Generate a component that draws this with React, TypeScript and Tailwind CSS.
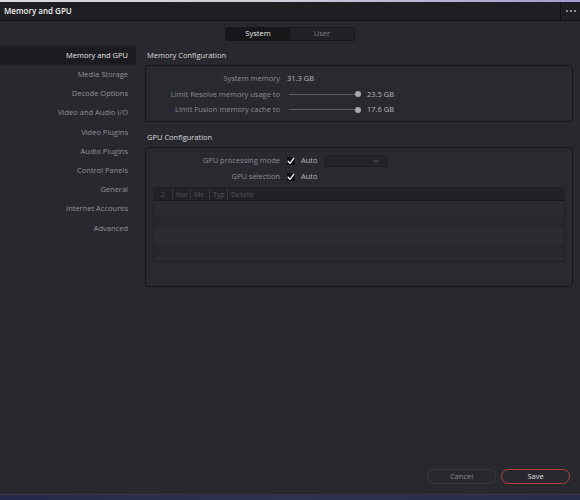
import React from "react";

const sidebar = [
  "Memory and GPU",
  "Media Storage",
  "Decode Options",
  "Video and Audio I/O",
  "Video Plugins",
  "Audio Plugins",
  "Control Panels",
  "General",
  "Internet Accounts",
  "Advanced",
];

function Check() {
  return (
    <div className="w-[10px] h-[10px] bg-[#0e0e10] rounded-[1px] border border-[#2e2e33] flex items-center justify-center">
      <svg width="8" height="8" viewBox="0 0 8 8">
        <path d="M1.2 4.3 L3.1 6.3 L6.9 1.2" stroke="#f2f2f2" strokeWidth="1.4" fill="none" strokeLinecap="round" strokeLinejoin="round" />
      </svg>
    </div>
  );
}

function Slider() {
  return (
    <div className="relative w-[72px] h-[8px] flex items-center">
      <div className="w-[68px] h-[1px] bg-[#5f5f65]" />
      <div className="absolute left-[66px] top-[1px] w-[6px] h-[6px] rounded-full bg-[#a9a9ae]" />
    </div>
  );
}

export default function App() {
  return (
    <div className="w-[580px] h-[500px] flex flex-col bg-[#262c47] font-['Open_Sans',sans-serif] overflow-hidden">
      <div className="h-[2px] bg-gradient-to-r from-[#d9d9de] via-[#cfcbd8] to-[#a29bd0]" />
      <div className="h-[493px] flex flex-col bg-[#29282e] border-b border-[#3a3940]">
        {/* title bar */}
        <div className="h-[19px] flex items-stretch bg-[#1f1f23] border-b border-[#131316]">
          <div className="flex-1 flex items-center pl-[4px] text-[8px] font-semibold text-[#f0f0f0] leading-none">
            Memory and GPU
          </div>
          <div className="w-[20px] border-l border-[#111113] flex items-center justify-center gap-[2px]">
            <div className="w-[2px] h-[2px] bg-[#8b8b90]" />
            <div className="w-[2px] h-[2px] bg-[#8b8b90]" />
            <div className="w-[2px] h-[2px] bg-[#8b8b90]" />
          </div>
        </div>
        {/* tabs */}
        <div className="flex justify-center mt-[6px]">
          <div className="flex h-[14px] w-[130px] rounded-[2px] border border-[#17171a] overflow-hidden text-[7.5px] leading-none">
            <div className="flex-1 bg-[#17171a] text-[#ececec] flex items-center justify-center">System</div>
            <div className="flex-1 bg-[#222126] text-[#7f7f85] flex items-center justify-center">User</div>
          </div>
        </div>
        {/* body */}
        <div className="flex-1 flex mt-[5px]">
          <div className="w-[136px] flex flex-col">
            {sidebar.map((s, i) => (
              <div
                key={s}
                className={
                  "h-[19.2px] flex items-center justify-end pr-[8px] text-[7.5px] leading-none " +
                  (i === 0 ? "bg-[#1c1c20] text-[#e8e8e8]" : "text-[#929297]")
                }
              >
                {s}
              </div>
            ))}
          </div>
          <div className="flex-1 flex flex-col pl-[9px] pr-[7px]">
            <div className="h-[19px] flex items-center pl-[2px] text-[7.5px] text-[#dcdcdc] leading-none">Memory Configuration</div>
            <div className="h-[57px] rounded-[3px] border border-[#17171a] bg-[#2a2930] pt-[5px] text-[7.5px] leading-none">
              <div className="h-[15.5px] flex items-center">
                <div className="w-[134px] text-right text-[#8d8d92]">System memory</div>
                <div className="ml-[7px] text-[#b9b9bd]">31.3 GB</div>
              </div>
              <div className="h-[15.5px] flex items-center">
                <div className="w-[134px] text-right text-[#8d8d92]">Limit Resolve memory usage to</div>
                <div className="ml-[9px]"><Slider /></div>
                <div className="ml-[6px] text-[#b9b9bd]">23.5 GB</div>
              </div>
              <div className="h-[15.5px] flex items-center">
                <div className="w-[134px] text-right text-[#8d8d92]">Limit Fusion memory cache to</div>
                <div className="ml-[9px]"><Slider /></div>
                <div className="ml-[6px] text-[#b9b9bd]">17.6 GB</div>
              </div>
            </div>

            <div className="h-[19px] mt-[6px] flex items-center pl-[2px] text-[7.5px] text-[#dcdcdc] leading-none">GPU Configuration</div>
            <div className="h-[140px] rounded-[3px] border border-[#17171a] bg-[#2a2930] pt-[5px] text-[7.5px] leading-none">
              <div className="h-[16px] flex items-center">
                <div className="w-[134px] text-right text-[#8d8d92]">GPU processing mode</div>
                <div className="ml-[6px]"><Check /></div>
                <div className="ml-[5px] text-[#b9b9bd]">Auto</div>
                <div className="ml-[7px] w-[62px] h-[12px] rounded-[2px] bg-[#242328] border border-[#1e1d22] flex items-center justify-end pr-[7px]">
                  <svg width="6" height="4" viewBox="0 0 6 4">
                    <path d="M0.5 0.8 L3 3.2 L5.5 0.8" stroke="#6e6e74" strokeWidth="0.9" fill="none" />
                  </svg>
                </div>
              </div>
              <div className="h-[16px] flex items-center">
                <div className="w-[134px] text-right text-[#8d8d92]">GPU selection</div>
                <div className="ml-[6px]"><Check /></div>
                <div className="ml-[5px] text-[#b9b9bd]">Auto</div>
              </div>
              <div className="mt-[2px] mx-[7px] h-[75px] rounded-[2px] border border-[#202024] overflow-hidden flex flex-col">
                <div className="h-[13px] bg-[#222126] border-b border-[#19191c] flex items-center text-[#55555b] text-[7px]">
                  <div className="w-[19px] h-full flex items-center justify-center border-r border-[#38373d]">2</div>
                  <div className="w-[18px] h-full flex items-center pl-[3px] border-r border-[#38373d] overflow-hidden">Nar</div>
                  <div className="w-[19px] h-full flex items-center pl-[3px] border-r border-[#38373d] overflow-hidden">Me</div>
                  <div className="w-[18px] h-full flex items-center pl-[3px] border-r border-[#38373d] overflow-hidden">Typ</div>
                  <div className="flex-1 h-full flex items-center pl-[3px]">Details</div>
                </div>
                <div className="h-[14px] bg-[#2c2b31]" />
                <div className="h-[14px] bg-[#28272c]" />
                <div className="h-[14px] bg-[#2c2b31]" />
                <div className="h-[14px] bg-[#28272c]" />
                <div className="flex-1 bg-[#2c2b31]" />
              </div>
            </div>

            <div className="flex-1" />
            <div className="flex justify-end gap-[5px] pb-[10px] pr-[3px] text-[7.5px] leading-none">
              <div className="w-[69px] h-[15px] rounded-full border border-[#3c3b41] flex items-center justify-center text-[#8a8a8f]">Cancel</div>
              <div className="w-[69px] h-[15px] rounded-full border border-[#b0413b] flex items-center justify-center text-[#dedede]">Save</div>
            </div>
          </div>
        </div>
      </div>
      <div className="flex-1 bg-gradient-to-r from-[#23294a] via-[#2c3352] to-[#262b48]" />
    </div>
  );
}
